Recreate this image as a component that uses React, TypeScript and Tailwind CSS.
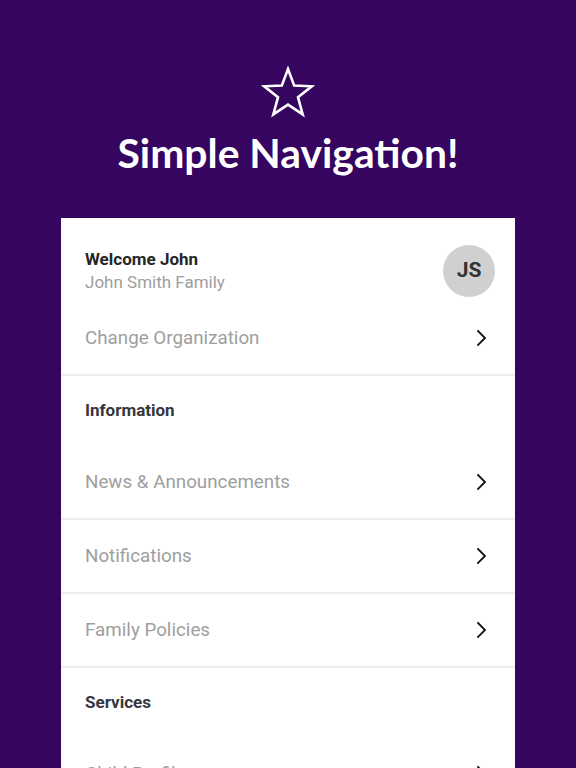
import React from "react";

function Chevron() {
  return (
    <svg width="12" height="18" viewBox="0 0 12 18" fill="none" className="shrink-0">
      <polyline points="3,2 10,9 3,16" stroke="#111" strokeWidth="1.8" strokeLinecap="square" strokeLinejoin="miter" />
    </svg>
  );
}

function Item({ label }: { label: string }) {
  return (
    <div className="h-[74px] flex items-center justify-between pl-[24px] pr-[28px] border-b-2 border-[#eeeeee]">
      <span className="text-[18.8px] text-[#9e9e9e]">{label}</span>
      <Chevron />
    </div>
  );
}

function Header({ label }: { label: string }) {
  return (
    <div className="h-[70px] flex items-center pl-[24px]">
      <span className="text-[17px] font-bold text-[#35373d]">{label}</span>
    </div>
  );
}

export default function App() {
  return (
    <div className="h-[768px] w-[576px] overflow-hidden bg-[#35055f] flex flex-col items-center" style={{ fontFamily: "Roboto, 'Noto Sans', sans-serif" }}>
      <div className="pt-[66px] flex flex-col items-center">
        <svg width="54" height="52" viewBox="0 0 54 52" fill="none">
          <polygon
            points="27,3 33.2,19.6 50.8,20.3 37,31.3 41.7,48.4 27,38.6 12.3,48.4 17,31.3 3.2,20.3 20.8,19.6"
            stroke="white"
            strokeWidth="2.6"
            strokeLinejoin="miter"
          />
        </svg>
        <h1 className="mt-[11px] text-[40.8px] leading-[48px] font-bold text-white" style={{ fontFamily: "Lato, sans-serif" }}>
          Simple Navigation!
        </h1>
      </div>
      <div className="mt-[41px] w-[454px] bg-white flex flex-col">
        <div className="pt-[27px] pl-[24px] pr-[20px] flex items-center justify-between">
          <div className="flex flex-col">
            <span className="text-[17px] leading-[23px] font-bold text-[#262626]">Welcome John</span>
            <span className="text-[17px] leading-[23px] text-[#9e9e9e]">John Smith Family</span>
          </div>
          <div className="w-[52px] h-[52px] rounded-full bg-[#d0d0d0] flex items-center justify-center">
            <span className="text-[21px] font-bold text-[#333333]">JS</span>
          </div>
        </div>
        <div className="mt-[5px] h-[72px] flex items-center justify-between pl-[24px] pr-[28px] border-b-2 border-[#eeeeee] box-content">
          <span className="text-[18.8px] text-[#9e9e9e]">Change Organization</span>
          <Chevron />
        </div>
        <Header label="Information" />
        <Item label="News & Announcements" />
        <Item label="Notifications" />
        <Item label="Family Policies" />
        <Header label="Services" />
        <Item label="Child Profiles" />
      </div>
    </div>
  );
}
